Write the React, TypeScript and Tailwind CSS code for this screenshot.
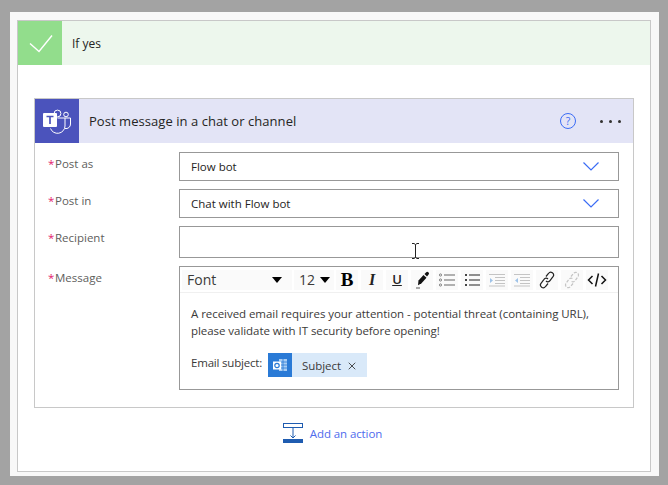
import { X } from "lucide-react";

const fontStack = { fontFamily: '"Open Sans", "Noto Sans", sans-serif' };

function TeamsIcon() {
    return (
        <svg width="44" height="44" viewBox="0 0 44 44" fill="none">
            <circle cx="22.5" cy="14.5" r="3.4" stroke="white" strokeWidth="1" />
            <circle cx="31" cy="15.5" r="2.3" stroke="white" strokeWidth="1" />
            <path d="M22.5 19H30v8a7.5 7.5 0 0 1-14.5 2.5" stroke="white" strokeWidth="1" />
            <path d="M30 19h5.5v6a4.5 4.5 0 0 1-5.5 4.5" stroke="white" strokeWidth="1" />
            <rect x="8" y="14" width="14" height="14" rx="1" fill="white" />
            <path d="M11.5 17.5h7M15 17.5v7.5" stroke="#4b53bc" strokeWidth="1.7" />
        </svg>
    );
}

function OutlookIcon() {
    return (
        <svg width="24" height="24" viewBox="0 0 24 24" fill="none">
            <rect x="11" y="6" width="8" height="12" fill="#a9cdf3" />
            <path d="M11 9h8M11 12h8M11 15h8M15 6v12" stroke="#2a7ad6" strokeWidth="0.8" />
            <rect x="5" y="8.5" width="8" height="8" fill="white" />
            <circle cx="9" cy="12.5" r="2.2" stroke="#2a7ad6" strokeWidth="1.2" />
        </svg>
    );
}

function ToolButton({ children }: { children: React.ReactNode }) {
    return <div className="flex h-5 w-[22px] items-center justify-center bg-[#fafafa]">{children}</div>;
}

function ListIcon({ numbered }: { numbered?: boolean }) {
    return (
        <svg width="18" height="14" viewBox="0 0 18 14" fill="none">
            {[2, 7, 12].map((y) => (
                <g key={y}>
                    {numbered ? (
                        <path d={`M2 ${y}h2`} stroke="#444" strokeWidth="2" />
                    ) : (
                        <circle cx="2.5" cy={y} r="1.1" stroke="#555" strokeWidth="0.7" />
                    )}
                    <path d={`M6 ${y}h11`} stroke={numbered ? "#222" : "#666"} strokeWidth="1" />
                </g>
            ))}
        </svg>
    );
}

function IndentIcon({ flip }: { flip?: boolean }) {
    return (
        <svg width="18" height="14" viewBox="0 0 18 14" fill="none" stroke="#c4c4c4" strokeWidth="1">
            <path d="M1 1.5h16M7 4.5h10M7 7.5h10M7 10.5h10M1 13h16" />
            <path d={flip ? "M5 5L2 7.5 5 10z" : "M2 5l3 2.5L2 10z"} fill="#9fc3e8" stroke="none" />
        </svg>
    );
}

function LinkIcon({ broken }: { broken?: boolean }) {
    const color = broken ? "#c4c4c4" : "#222";
    return (
        <svg width="18" height="18" viewBox="0 0 18 18" fill="none" stroke={color} strokeWidth="1.2" strokeDasharray={broken ? "3 1.5" : undefined}>
            <path d="M8 5.5l2.5-3a2.7 2.7 0 0 1 4.5 3.2l-3 4a2.6 2.6 0 0 1-4 .3" />
            <path d="M10 12.5l-2.5 3a2.7 2.7 0 0 1-4.5-3.2l3-4a2.6 2.6 0 0 1 4-.3" />
        </svg>
    );
}

function Field({ label, height, children }: { label: string; height: string; children: React.ReactNode }) {
    return (
        <div className="flex">
            <div className="flex w-[144px] pl-[13px] pt-1 text-[11.5px] leading-4 text-[#605e5c]">
                <span className="w-[7px] text-[#e3206b]">*</span>
                {label}
            </div>
            <div className={`w-[440px] border border-[#989898] bg-white ${height}`}>{children}</div>
        </div>
    );
}

function SelectValue({ text }: { text: string }) {
    return (
        <div className="flex h-full items-center justify-between pl-[11px] pr-[19px] text-[11.5px] text-[#252423]">
            {text}
            <svg width="16" height="9" viewBox="0 0 16 9" fill="none" stroke="#3b6cf5" strokeWidth="1.2">
                <path d="M.5.5L8 8l7.5-7.5" />
            </svg>
        </div>
    );
}

export default function App() {
    return (
        <div className="h-[485px] w-[668px] overflow-hidden bg-[#a3a3a3] pl-[10px] pt-[12px]" style={fontStack}>
            <div className="h-[464px] w-[649px] bg-[#f8f8f8] pl-[7px] pt-[8px]">
                <div className="h-[452px] w-[634px] border border-[#c8c8c8] bg-white">
                    {/* If yes */}
                    <div className="flex h-11 items-center bg-[#edf7ed]">
                        <div className="flex h-11 w-11 items-center justify-center bg-[#92dd8c]">
                            <svg width="44" height="44" viewBox="0 0 44 44" fill="none">
                                <path d="M12 22.5l9 8 13-16" stroke="white" strokeWidth="1.4" />
                            </svg>
                        </div>
                        <span className="ml-[10px] pt-[2px] text-xs text-[#252423]">If yes</span>
                    </div>

                    {/* Teams action */}
                    <div className="ml-4 mt-[33px] h-[310px] w-[600px] border border-[#c8c8c8]">
                        <div className="flex h-11 items-center bg-[#e3e4f6]">
                            <div className="h-11 w-11 bg-[#4b53bc]">
                                <TeamsIcon />
                            </div>
                            <span className="ml-[10px] pt-[2px] text-[13px] tracking-[0.05px] text-[#252423]">Post message in a chat or channel</span>
                            <div className="ml-auto flex items-center pr-3">
                                <div className="flex h-4 w-4 items-center justify-center rounded-full border border-[#3b6cf5] text-[10.5px] leading-none text-[#3b6cf5]">?</div>
                                <div className="ml-6 flex gap-[6px]">
                                    <span className="h-[3px] w-[3px] rounded-full bg-[#323130]" />
                                    <span className="h-[3px] w-[3px] rounded-full bg-[#323130]" />
                                    <span className="h-[3px] w-[3px] rounded-full bg-[#323130]" />
                                </div>
                            </div>
                        </div>

                        <div className="flex flex-col gap-2 pt-[9px]">
                            <Field label="Post as" height="h-[29px]">
                                <SelectValue text="Flow bot" />
                            </Field>
                            <Field label="Post in" height="h-[29px]">
                                <SelectValue text="Chat with Flow bot" />
                            </Field>
                            <Field label="Recipient" height="h-8">
                                <div className="relative h-full">
                                    {/* text cursor */}
                                    <svg className="absolute left-[231px] top-[16px]" width="9" height="16" viewBox="0 0 9 16" fill="none" stroke="#222" strokeWidth="1">
                                        <path d="M1 .5h2l1.5 1 1.5-1h2M4.5 1.5v13M1 15.5h2l1.5-1 1.5 1h2" />
                                    </svg>
                                </div>
                            </Field>
                            <Field label="Message" height="h-[124px]">
                                <div className="flex h-[26px] items-center gap-[2px] border-b border-[#f0f0f0] pl-[2px]">
                                    <div className="flex h-5 w-[110px] items-center justify-between bg-[#fafafa] pl-[5px] pr-[10px] text-[14px] text-[#3b3a39]">
                                        Font
                                        <span className="h-0 w-0 border-x-[5px] border-t-[6px] border-x-transparent border-t-black" />
                                    </div>
                                    <div className="flex h-5 w-10 items-center justify-between bg-[#fafafa] pl-[5px] pr-[4px] text-[14px] text-[#3b3a39]">
                                        12
                                        <span className="h-0 w-0 border-x-[5px] border-t-[6px] border-x-transparent border-t-black" />
                                    </div>
                                    <div className="flex gap-[3px]">
                                        <ToolButton>
                                            <span className="text-[19px] font-bold leading-none text-black" style={{ fontFamily: '"Liberation Serif", serif' }}>B</span>
                                        </ToolButton>
                                        <ToolButton>
                                            <span className="text-[16px] font-bold italic leading-none text-[#222]" style={{ fontFamily: '"Liberation Serif", serif' }}>I</span>
                                        </ToolButton>
                                        <ToolButton>
                                            <span className="text-[13px] font-semibold leading-none text-[#222] underline">U</span>
                                        </ToolButton>
                                        <ToolButton>
                                            <svg width="18" height="18" viewBox="0 0 18 18" fill="none">
                                                <path d="M5.5 9.5l5-5.5 3 2.8-5 5.5-3.5 2z" fill="#111" />
                                                <path d="M11.5 3l1.5-1.6a1.7 1.7 0 0 1 2.6 2.2L14 5.6z" fill="#111" />
                                                <path d="M3 17h4" stroke="#555" strokeWidth="1" />
                                            </svg>
                                        </ToolButton>
                                        <ToolButton><ListIcon /></ToolButton>
                                        <ToolButton><ListIcon numbered /></ToolButton>
                                        <ToolButton><IndentIcon /></ToolButton>
                                        <ToolButton><IndentIcon flip /></ToolButton>
                                        <ToolButton><LinkIcon /></ToolButton>
                                        <ToolButton><LinkIcon broken /></ToolButton>
                                        <ToolButton>
                                            <svg width="20" height="16" viewBox="0 0 20 16" fill="none" stroke="#111" strokeWidth="1.5">
                                                <path d="M5.5 4L1.5 8l4 4M14.5 4l4 4-4 4M11.5 1.5l-3 13" />
                                            </svg>
                                        </ToolButton>
                                    </div>
                                </div>
                                <div className="px-[11px] pt-[12px] text-[11.5px] leading-[17px] tracking-[-0.05px] text-[#3b3a39]">
                                    <p>A received email requires your attention - potential threat (containing URL),</p>
                                    <p>please validate with IT security before opening!</p>
                                    <div className="mt-[14px] flex items-start">
                                        <span className="w-[72px] whitespace-nowrap pt-[1px] tracking-[-0.2px]">Email subject:</span>
                                        <div className="ml-[5px] flex h-6 w-[99px] items-center bg-[#d9e9f9]">
                                            <div className="h-6 w-6 shrink-0 bg-[#2a7ad6]">
                                                <OutlookIcon />
                                            </div>
                                            <span className="ml-[10px]">Subject</span>
                                            <X size={12} strokeWidth={1.6} color="#252423" className="ml-[5px] mt-[2px]" />
                                        </div>
                                    </div>
                                </div>
                            </Field>
                        </div>
                    </div>

                    {/* Add an action */}
                    <div className="mt-[15px] flex items-center justify-center pr-[3px]">
                        <svg width="20" height="20" viewBox="0 0 20 20" fill="none">
                            <rect x="0.5" y="0.5" width="19" height="4" stroke="#1f5cb0" />
                            <path d="M10 5v10M7.5 12.5L10 15l2.5-2.5" stroke="#1f5cb0" />
                            <rect x="0" y="16" width="20" height="4" fill="#1f5cb0" />
                        </svg>
                        <span className="ml-[7px] pt-[2px] text-[11.5px] tracking-[-0.1px] text-[#4f6bed]">Add an action</span>
                    </div>
                </div>
            </div>
        </div>
    );
}
